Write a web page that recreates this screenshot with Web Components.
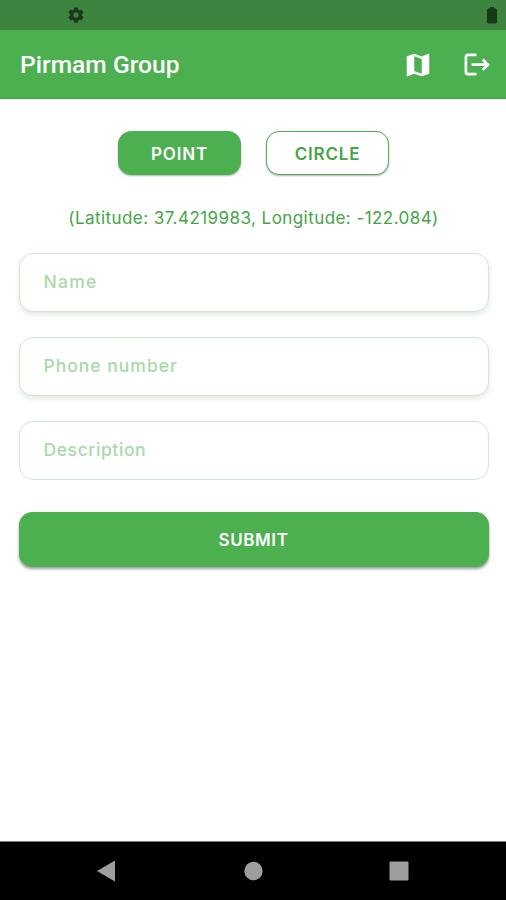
<!DOCTYPE html>
<html lang="en">
<head>
<meta charset="utf-8">
<title>Pirmam Group</title>
<style>
    body {
        margin: 0;
        background: #fff;
        --green: #4caf50;
        font-family: Inter, "Open Sans", sans-serif;
    }
</style>
</head>
<body>
<pirmam-app></pirmam-app>

<script>
class BaseElement extends HTMLElement {
    constructor() {
        super()
        const template = document.createElement("template")
        template.innerHTML = this.constructor.template
        this.attachShadow({ mode: "open" }).append(template.content.cloneNode(true))
    }
}

customElements.define("status-bar", class extends BaseElement {
    static template = /*html*/`
    <svg width="18" height="18" viewBox="0 0 24 24"><path fill="#17381a" stroke="#17381a" stroke-width=".3" fill-rule="evenodd" d="M19.4 13c0-.3.1-.6.1-1s0-.7-.1-1l2.1-1.6c.2-.2.3-.4.1-.7l-2-3.4c-.1-.2-.4-.3-.6-.2l-2.5 1c-.5-.4-1.1-.7-1.7-1l-.4-2.6c0-.3-.2-.5-.5-.5h-4c-.2 0-.4.2-.5.4l-.4 2.7c-.6.3-1.1.6-1.7 1l-2.4-1c-.3-.1-.5 0-.7.2l-2 3.4c-.1.3 0 .5.2.7L4.6 11c0 .3-.1.7-.1 1s0 .7.1 1l-2.2 1.6c-.2.2-.3.5-.2.7l2 3.4c.1.2.4.3.7.2l2.4-1c.6.4 1.1.7 1.7 1l.4 2.7c.1.2.3.4.5.4h4c.3 0 .5-.2.5-.4l.4-2.7c.6-.3 1.2-.6 1.7-1l2.5 1c.2.1.5 0 .6-.2l2-3.4c.2-.2.1-.5-.1-.7zM12 8.3a3.7 3.7 0 1 1 0 7.4 3.7 3.7 0 0 1 0-7.4z"/></svg>
    <svg width="10" height="17" viewBox="0 0 10 17"><path fill="#17381a" d="M3 0h4v1.5h1.5q1.5 0 1.5 1.5v12q0 1.5-1.5 1.5h-7Q0 16.5 0 15V3q0-1.5 1.5-1.5H3z"/></svg>

    <style>
        :host {
            display: flex;
            align-items: center;
            justify-content: space-between;
            height: 30px;
            box-sizing: border-box;
            padding: 0 9px 0 67px;
            background: #3d843f;
        }

        svg {
            display: block;
        }
    </style>
    `
})

customElements.define("app-bar", class extends BaseElement {
    static template = /*html*/`
    <h1><slot></slot></h1>
    <svg class="map" width="30" height="30" viewBox="0 0 24 24"><path fill="#fff" d="M20.5 3l-.16.03L15 5.1 9 3 3.36 4.9c-.21.07-.36.25-.36.48V20.5c0 .28.22.5.5.5l.16-.03L9 18.9l6 2.1 5.64-1.9c.21-.07.36-.25.36-.48V3.5c0-.28-.22-.5-.5-.5zM15 19l-6-2.11V5l6 2.11V19z"/></svg>
    <svg width="30" height="30" viewBox="0 0 30 30" fill="none" stroke="#fff" stroke-width="2.7"><path d="M15.5 4.8H7.4Q4.9 4.8 4.9 7.3v14.4q0 2.5 2.5 2.5h8.1"/><path d="M10.5 14.7H27M21.7 9.5l5.2 5.2-5.2 5.2"/></svg>

    <style>
        :host {
            display: flex;
            align-items: center;
            height: 69px;
            box-sizing: border-box;
            padding: 1px 15px 0 20px;
            background: var(--green);
            border-bottom: 1px solid #3fa544;
        }

        h1 {
            flex: 1;
            margin: 0;
            padding-top: 1px;
            color: #fff;
            font: 500 24.6px/30px Roboto, sans-serif;
        }

        .map {
            margin-right: 28px;
        }

        svg {
            display: block;
        }
    </style>
    `
})

customElements.define("app-button", class extends BaseElement {
    static template = /*html*/`
    <button><slot></slot></button>

    <style>
        :host {
            display: block;
            height: 44px;
        }

        :host([wide]) {
            height: 55px;
        }

        button {
            display: block;
            width: 100%;
            height: 100%;
            padding: 1px 0 0;
            border: 1px solid var(--green);
            border-radius: 13px;
            background: var(--green);
            color: #fff;
            font: 600 17px/20px Inter, sans-serif;
            letter-spacing: var(--spacing, 0);
            box-shadow: 0 1px 2px rgba(0, 0, 0, 0.3);
        }

        :host([outlined]) button {
            background: #fff;
            color: #43a547;
        }

        :host([wide]) button {
            box-shadow: 0 2px 3px rgba(0, 0, 0, 0.4);
        }
    </style>
    `
})

customElements.define("text-field", class extends BaseElement {
    static template = /*html*/`
    <slot></slot>

    <style>
        :host {
            display: flex;
            align-items: center;
            height: 59px;
            box-sizing: border-box;
            padding: 0 24px;
            border: 1.5px solid #cdeace;
            border-radius: 14px;
            background: #fff;
            color: #a8d9aa;
            font-size: 17.5px;
            font-weight: 500;
            line-height: 20px;
            letter-spacing: var(--spacing, 0);
            box-shadow: 0 3px 5px rgba(50, 110, 60, 0.14);
        }

        :host([flat]) {
            box-shadow: none;
        }
    </style>
    `
})

customElements.define("nav-bar", class extends BaseElement {
    static template = /*html*/`
    <svg width="20" height="22" viewBox="0 0 20 22"><path fill="#9e9e9e" d="M19 .5v21L1 11z"/></svg>
    <svg width="20" height="20" viewBox="0 0 20 20"><circle cx="10.5" cy="10" r="9.2" fill="#9e9e9e"/></svg>
    <svg width="20" height="20" viewBox="0 0 20 20"><rect x=".5" y=".5" width="19" height="19" rx="1" fill="#9e9e9e"/></svg>

    <style>
        :host {
            display: flex;
            align-items: center;
            justify-content: space-between;
            height: 59px;
            box-sizing: border-box;
            padding: 0 97px 0 96px;
            background: #000;
            border-top: 1px solid #777;
        }
    </style>
    `
})

customElements.define("pirmam-app", class extends BaseElement {
    static template = /*html*/`
    <status-bar></status-bar>
    <app-bar>Pirmam Group</app-bar>
    <main>
        <div class="modes">
            <app-button style="--spacing: 0.8px">POINT</app-button>
            <app-button outlined style="--spacing: 0.8px">CIRCLE</app-button>
        </div>
        <p>(Latitude: 37.4219983, Longitude: -122.084)</p>
        <div class="fields">
            <text-field style="--spacing: 1.3px">Name</text-field>
            <text-field style="--spacing: 1px">Phone number</text-field>
            <text-field flat style="--spacing: 0.6px">Description</text-field>
        </div>
        <app-button class="submit" wide style="--spacing: 0.6px">SUBMIT</app-button>
    </main>
    <nav-bar></nav-bar>

    <style>
        :host {
            display: flex;
            flex-direction: column;
            height: 900px;
        }

        main {
            flex: 1;
            padding: 32px 17.5px 0 18.5px;
        }

        .modes {
            display: grid;
            grid-template-columns: 123px 123px;
            gap: 25px;
            justify-content: center;
        }

        p {
            margin: 33px 0 24.5px;
            color: #43a547;
            font-size: 17px;
            line-height: 20px;
            text-align: center;
            white-space: nowrap;
            letter-spacing: 0.44px;
        }

        .fields {
            display: grid;
            gap: 25px;
        }

        .submit {
            margin-top: 32.5px;
        }
    </style>
    `
})
</script>
</body>
</html>
